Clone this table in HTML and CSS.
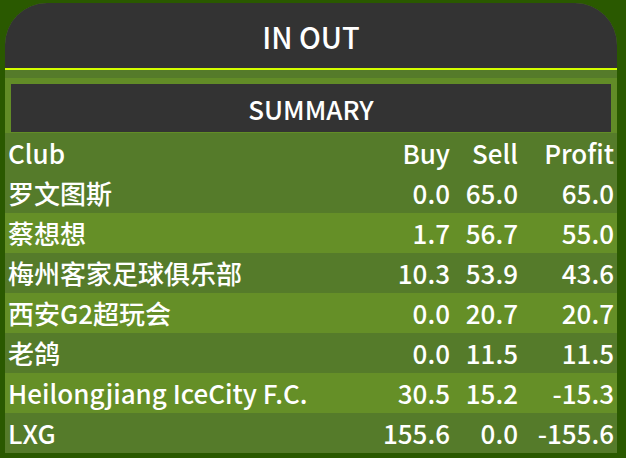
FILE: index.html
```html
<!DOCTYPE html>
<html>
<head>
<meta charset="utf-8">
<link rel="stylesheet" href="styles.css">
</head>
<body>
<div class="card">
  <div class="title">IN OUT</div>
  <div class="body">
    <div class="summary-wrap"><div class="summary">SUMMARY</div></div>
    <table class="tbl">
      <colgroup><col><col class="c-buy"><col class="c-sell"><col class="c-profit"></colgroup>
      <thead>
        <tr><th class="club">Club</th><th>Buy</th><th>Sell</th><th>Profit</th></tr>
      </thead>
      <tbody>
        <tr><td class="club">罗文图斯</td><td>0.0</td><td>65.0</td><td>65.0</td></tr>
        <tr><td class="club">蔡想想</td><td>1.7</td><td>56.7</td><td>55.0</td></tr>
        <tr><td class="club">梅州客家足球俱乐部</td><td>10.3</td><td>53.9</td><td>43.6</td></tr>
        <tr><td class="club">西安G2超玩会</td><td>0.0</td><td>20.7</td><td>20.7</td></tr>
        <tr><td class="club">老鸽</td><td>0.0</td><td>11.5</td><td>11.5</td></tr>
        <tr><td class="club">Heilongjiang IceCity F.C.</td><td>30.5</td><td>15.2</td><td>-15.3</td></tr>
        <tr><td class="club">LXG</td><td>155.6</td><td>0.0</td><td>-155.6</td></tr>
      </tbody>
    </table>
  </div>
</div>
</body>
</html>
```

FILE: styles.css
```css
html, body {
  margin: 0;
  padding: 0;
}
body {
  background: #2a5900;
  font-family: "Noto Sans CJK SC", "Noto Sans", sans-serif;
  color: #ffffff;
  height: 458px;
  overflow: hidden;
}
.card {
  margin: 3px 0 0 5px;
  width: 612px;
  border-radius: 42px 42px 0 0;
  overflow: hidden;
  background: #557b2a;
}
.title {
  background: #333333;
  height: 65px;
  display: flex;
  align-items: center;
  justify-content: center;
  font-size: 29px;
  font-weight: 500;
  border-bottom: 2px solid #d4ff00;
  padding-top: 1px;
  box-sizing: border-box;
  height: 67px;
}
.body {
  padding-top: 8px;
}
.summary-wrap {
  background: #628c27;
  padding: 6px 6px 1px 6px;
}
.summary {
  background: #333333;
  height: 48px;
  display: flex;
  align-items: center;
  justify-content: center;
  font-size: 26px;
  font-weight: 500;
}
.tbl {
  width: 100%;
  border-collapse: collapse;
  table-layout: fixed;
  font-size: 26px;
  font-weight: 500;
}
.c-buy { width: 80px; }
.c-sell { width: 68px; }
.c-profit { width: 96px; }
.tbl th, .tbl td {
  height: 40px;
  padding: 0 3px 0 0;
  text-align: right;
  font-weight: 500;
  white-space: nowrap;
  line-height: 40px;
}
.tbl .club {
  text-align: left;
  padding-left: 3px;
}
.tbl tbody tr:nth-child(even) {
  background: #658f27;
}
```
